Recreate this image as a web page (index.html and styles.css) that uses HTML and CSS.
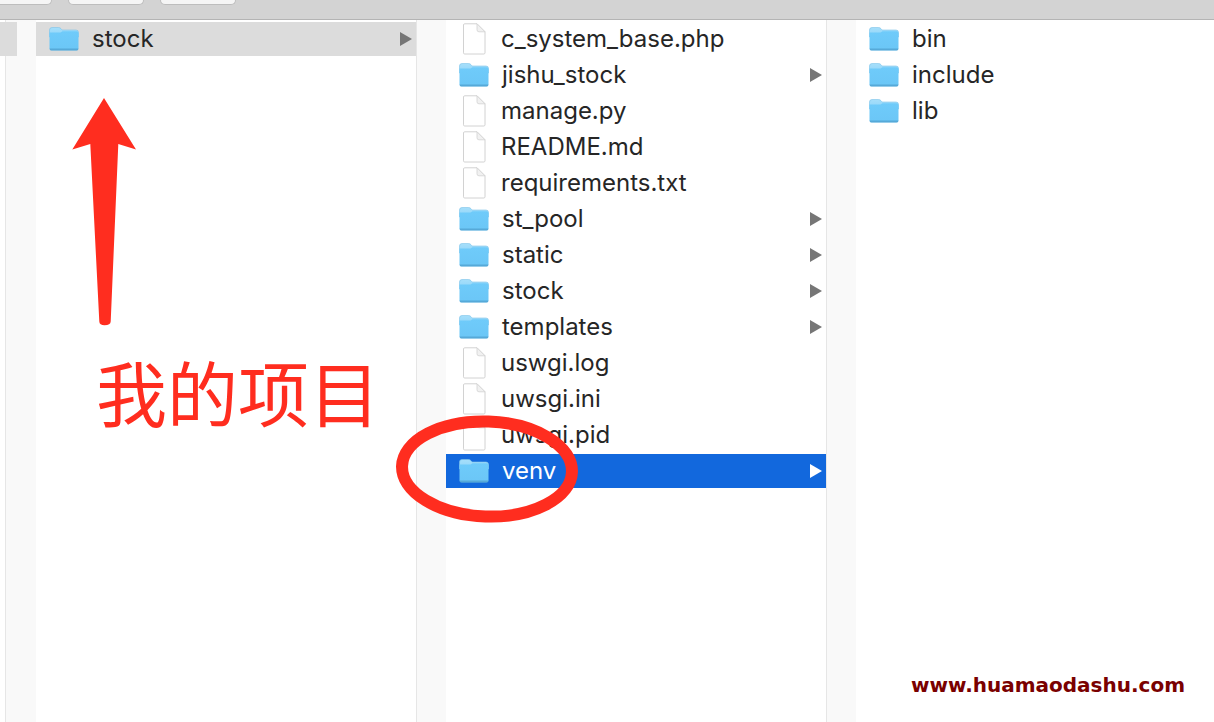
FILE: index.html
```html
<!DOCTYPE html>
<html lang="en">
<head>
    <meta charset="UTF-8">
    <meta name="viewport" content="width=device-width, initial-scale=1.0">
    <title>Finder - stock</title>
    <link rel="stylesheet" href="styles.css">
</head>
<body>
    <svg class="defs" width="0" height="0" aria-hidden="true">
        <defs>
            <linearGradient id="folder-back" x1="0" y1="0" x2="0" y2="1">
                <stop offset="0" stop-color="#a6dffb"/>
                <stop offset="1" stop-color="#8ed4f8"/>
            </linearGradient>
            <linearGradient id="folder-front" x1="0" y1="0" x2="0" y2="1">
                <stop offset="0" stop-color="#6fcbfa"/>
                <stop offset="1" stop-color="#6bc6f6"/>
            </linearGradient>
            <symbol id="folder" viewBox="0 0 30 24">
                <path d="M0.5 3Q0.5 0.5 3 0.5H9.5Q11 0.5 12 1.7L13.2 3H27Q29.5 3 29.5 5.5V10H0.5Z" fill="url(#folder-back)" stroke="#7cc3ea" stroke-width="0.6"/>
                <path d="M0.5 5.5H11.5L13.5 4.2H27.5Q29.5 4.2 29.5 6V21.5Q29.5 23.3 27.5 23.3H2.5Q0.5 23.3 0.5 21.5Z" fill="url(#folder-front)"/>
                <path d="M0.7 21.6H29.3V22Q29.3 23.5 27.5 23.5H2.5Q0.7 23.5 0.7 22Z" fill="#56a9d8"/>
            </symbol>
            <symbol id="file" viewBox="0 0 24 32">
                <path d="M1.5 2Q1.5 0.8 2.7 0.8H15L23 8.8V29.8Q23 31 21.8 31H2.7Q1.5 31 1.5 29.8Z" fill="#fff" stroke="#d2d2d2" stroke-width="1"/>
                <path d="M15 0.8V6.8Q15 8.8 17 8.8H23Z" fill="#f1f1f1" stroke="#d2d2d2" stroke-width="0.8"/>
            </symbol>
        </defs>
    </svg>

    <header class="toolbar">
        <span class="tool-btn tool-first"></span>
        <span class="tool-btn tool-second"></span>
        <span class="tool-btn tool-third"></span>
    </header>

    <main class="browser">
        <section class="column column-stub">
            <div class="row row-muted"></div>
        </section>

        <section class="column column-first">
            <div class="row row-muted">
                <svg class="icon-folder"><use href="#folder"/></svg>
                <span class="name">stock</span>
                <span class="chevron"></span>
            </div>
        </section>

        <section class="column column-second">
            <div class="row">
                <svg class="icon-file"><use href="#file"/></svg>
                <span class="name">c_system_base.php</span>
            </div>
            <div class="row">
                <svg class="icon-folder"><use href="#folder"/></svg>
                <span class="name">jishu_stock</span>
                <span class="chevron"></span>
            </div>
            <div class="row">
                <svg class="icon-file"><use href="#file"/></svg>
                <span class="name">manage.py</span>
            </div>
            <div class="row">
                <svg class="icon-file"><use href="#file"/></svg>
                <span class="name">README.md</span>
            </div>
            <div class="row">
                <svg class="icon-file"><use href="#file"/></svg>
                <span class="name">requirements.txt</span>
            </div>
            <div class="row">
                <svg class="icon-folder"><use href="#folder"/></svg>
                <span class="name">st_pool</span>
                <span class="chevron"></span>
            </div>
            <div class="row">
                <svg class="icon-folder"><use href="#folder"/></svg>
                <span class="name">static</span>
                <span class="chevron"></span>
            </div>
            <div class="row">
                <svg class="icon-folder"><use href="#folder"/></svg>
                <span class="name">stock</span>
                <span class="chevron"></span>
            </div>
            <div class="row">
                <svg class="icon-folder"><use href="#folder"/></svg>
                <span class="name">templates</span>
                <span class="chevron"></span>
            </div>
            <div class="row">
                <svg class="icon-file"><use href="#file"/></svg>
                <span class="name">uswgi.log</span>
            </div>
            <div class="row">
                <svg class="icon-file"><use href="#file"/></svg>
                <span class="name">uwsgi.ini</span>
            </div>
            <div class="row">
                <svg class="icon-file"><use href="#file"/></svg>
                <span class="name">uwsgi.pid</span>
            </div>
            <div class="row row-active">
                <svg class="icon-folder"><use href="#folder"/></svg>
                <span class="name">venv</span>
                <span class="chevron"></span>
            </div>
        </section>

        <section class="column column-third">
            <div class="row">
                <svg class="icon-folder"><use href="#folder"/></svg>
                <span class="name">bin</span>
            </div>
            <div class="row">
                <svg class="icon-folder"><use href="#folder"/></svg>
                <span class="name">include</span>
            </div>
            <div class="row">
                <svg class="icon-folder"><use href="#folder"/></svg>
                <span class="name">lib</span>
            </div>
        </section>
    </main>

    <!-- red annotations drawn on top of the screenshot -->
    <svg class="mark-arrow" viewBox="0 0 70 232" aria-hidden="true">
        <path d="M32 1L64 52.500L46.300 47L38.700 224.500Q38.500 228.300 32.500 228.300Q27.500 228.300 27.300 224.500L18.300 47L0.300 52.500Z"/>
    </svg>
    <div class="mark-label">我的项目</div>
    <svg class="mark-ring" viewBox="0 0 190 116" aria-hidden="true">
        <ellipse cx="95" cy="58" rx="85" ry="47.500" transform="rotate(2 95 58)"/>
    </svg>
    <div class="watermark">www.huamaodashu.com</div>
</body>
</html>
```

FILE: styles.css
```css
/* General Styles */
html, body {
    height: 100%;
}

body {
    background: #fff;
    color: #262626;
    font-family: Inter, "Noto Sans", sans-serif;
    margin: 0;
    overflow: hidden;
    position: relative;
}

.defs {
    position: absolute;
}

/* Toolbar */
.toolbar {
    background: #d3d3d3;
    border-bottom: 1px solid #b4b4b4;
    box-sizing: border-box;
    display: flex;
    height: 20px;
}

.tool-btn {
    background: #f5f5f5;
    border: 1px solid #bdbdbd;
    border-top: none;
    border-radius: 0 0 6px 6px;
    box-sizing: border-box;
    height: 5px;
}

.tool-first {
    border-left: none;
    border-radius: 0 0 6px 0;
    margin-right: 16px;
    width: 52px;
}

.tool-second {
    margin-right: 16px;
    width: 76px;
}

.tool-third {
    width: 76px;
}

/* Columns */
.browser {
    display: flex;
    height: 702px;
}

.column {
    background: #fff;
    box-sizing: border-box;
    display: flex;
    flex-direction: column;
    gap: 2px;
    padding-top: 2px;
}

.column-stub {
    border-right: 30px solid #f9f9f9;
    box-shadow: inset -1px 0 0 #e6e6e6;
    width: 36px;
}

.column-stub .row {
    width: 6px;
}

.column-first,
.column-second {
    width: 380px;
}

.column-third {
    flex: 1;
}

.column-second,
.column-third {
    position: relative;
}

.column-first {
    margin-right: 30px;
}

.column-second {
    margin-right: 30px;
}

/* gutter between two columns */
.column-first,
.column-second {
    box-shadow: 1px 0 0 #e6e6e6, 30px 0 0 #f9f9f9, 29px 0 0 #f9f9f9;
}

.row {
    align-items: center;
    box-sizing: border-box;
    display: flex;
    flex-shrink: 0;
    height: 34px;
    padding: 0 4px 0 13px;
}

.row-muted {
    background: #dcdcdc;
}

.row-active {
    background: #1268dd;
    color: #fff;
}

.icon-folder {
    flex-shrink: 0;
    height: 24px;
    margin-right: 13px;
    width: 30px;
}

.icon-file {
    flex-shrink: 0;
    height: 32px;
    margin-right: 15px;
    margin-left: 3px;
    width: 24px;
}

.name {
    flex: 1;
    font-size: 24px;
    line-height: 34px;
    white-space: nowrap;
}

.chevron {
    border-bottom: 7px solid transparent;
    border-left: 12px solid #767676;
    border-top: 7px solid transparent;
    height: 0;
    width: 0;
}

.row-active .chevron {
    border-left-color: #fff;
}

/* Annotations */
.mark-arrow {
    fill: #ff2d1f;
    height: 232px;
    left: 72px;
    position: absolute;
    top: 97px;
    width: 70px;
}

.mark-label {
    color: #ff2d1f;
    font-family: "Noto Sans CJK SC", sans-serif;
    font-size: 71px;
    left: 96px;
    line-height: 80px;
    position: absolute;
    top: 350px;
    white-space: nowrap;
}

.mark-ring {
    fill: none;
    height: 116px;
    left: 392px;
    position: absolute;
    stroke: #ff2d1f;
    stroke-width: 12px;
    top: 411px;
    width: 190px;
}

.watermark {
    color: #7a0000;
    font-family: "DejaVu Sans", sans-serif;
    font-size: 20px;
    font-weight: 700;
    left: 911px;
    line-height: 24px;
    position: absolute;
    top: 673px;
    white-space: nowrap;
}
```
